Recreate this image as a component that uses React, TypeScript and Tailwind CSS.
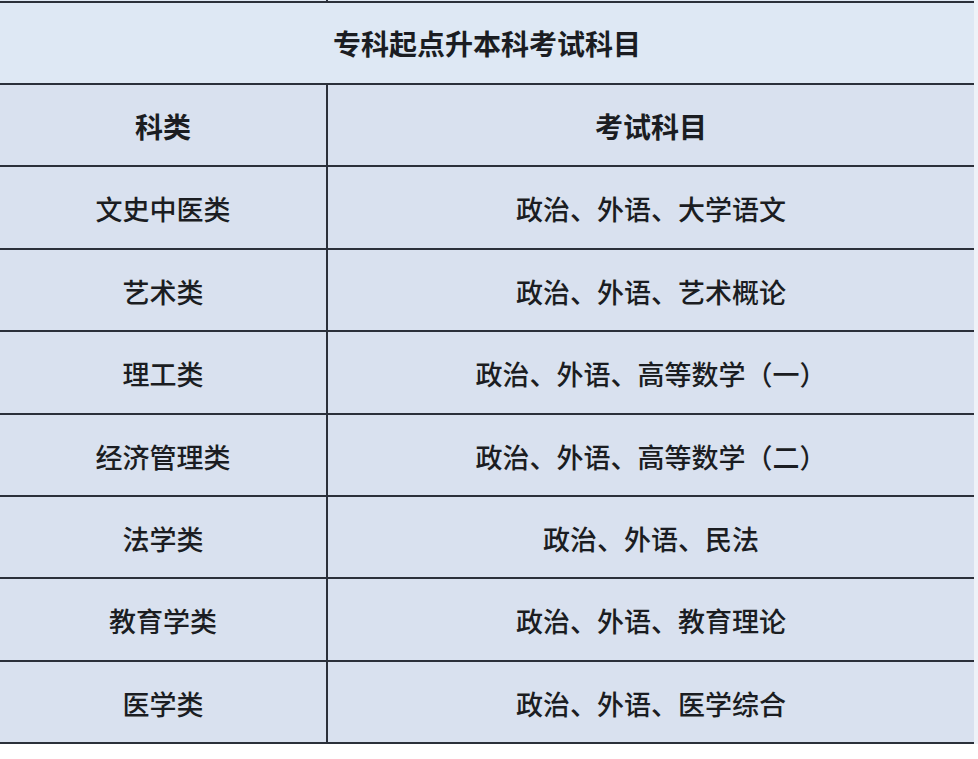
const rows = [
  { type: "文史中医类", subjects: "政治、外语、大学语文" },
  { type: "艺术类", subjects: "政治、外语、艺术概论" },
  { type: "理工类", subjects: "政治、外语、高等数学（一）" },
  { type: "经济管理类", subjects: "政治、外语、高等数学（二）" },
  { type: "法学类", subjects: "政治、外语、民法" },
  { type: "教育学类", subjects: "政治、外语、教育理论" },
  { type: "医学类", subjects: "政治、外语、医学综合" },
];

const font = { fontFamily: '"Noto Sans CJK SC", "Noto Sans", sans-serif' };

export default function App() {
  return (
    <div className="w-[978px] h-[759px] bg-white text-[#1b1d22] flex" style={font}>
      <div className="w-[974px] flex flex-col">
        {/* tail of the previous row */}
        <div className="h-[1px] flex bg-[#dfe8f3]">
          <div className="w-[328px] border-r-2 border-[#2b303a]" />
        </div>

        <div className="h-[84px] border-y-2 border-[#2b303a] bg-[#dee8f4] flex items-center justify-center text-[28px] font-bold">
          专科起点升本科考试科目
        </div>

        <div className="h-[82.4px] border-b-2 border-[#2b303a] bg-[#d9e1ef] grid grid-cols-[328px_1fr] text-[28px] font-bold">
          <div className="border-r-2 border-[#2b303a] flex items-center justify-center pt-[2px]">科类</div>
          <div className="flex items-center justify-center pt-[2px]">考试科目</div>
        </div>

        {rows.map((r) => (
          <div
            key={r.type}
            className="h-[82.4px] border-b-2 border-[#2b303a] bg-[#d9e1ef] grid grid-cols-[328px_1fr] text-[27px] font-medium"
          >
            <div className="border-r-2 border-[#2b303a] flex items-center justify-center pt-[4px]">{r.type}</div>
            <div className="flex items-center justify-center pt-[4px]">{r.subjects}</div>
          </div>
        ))}
      </div>
      <div className="flex-1 h-[744px] bg-[#eef2f8]" />
    </div>
  );
}
